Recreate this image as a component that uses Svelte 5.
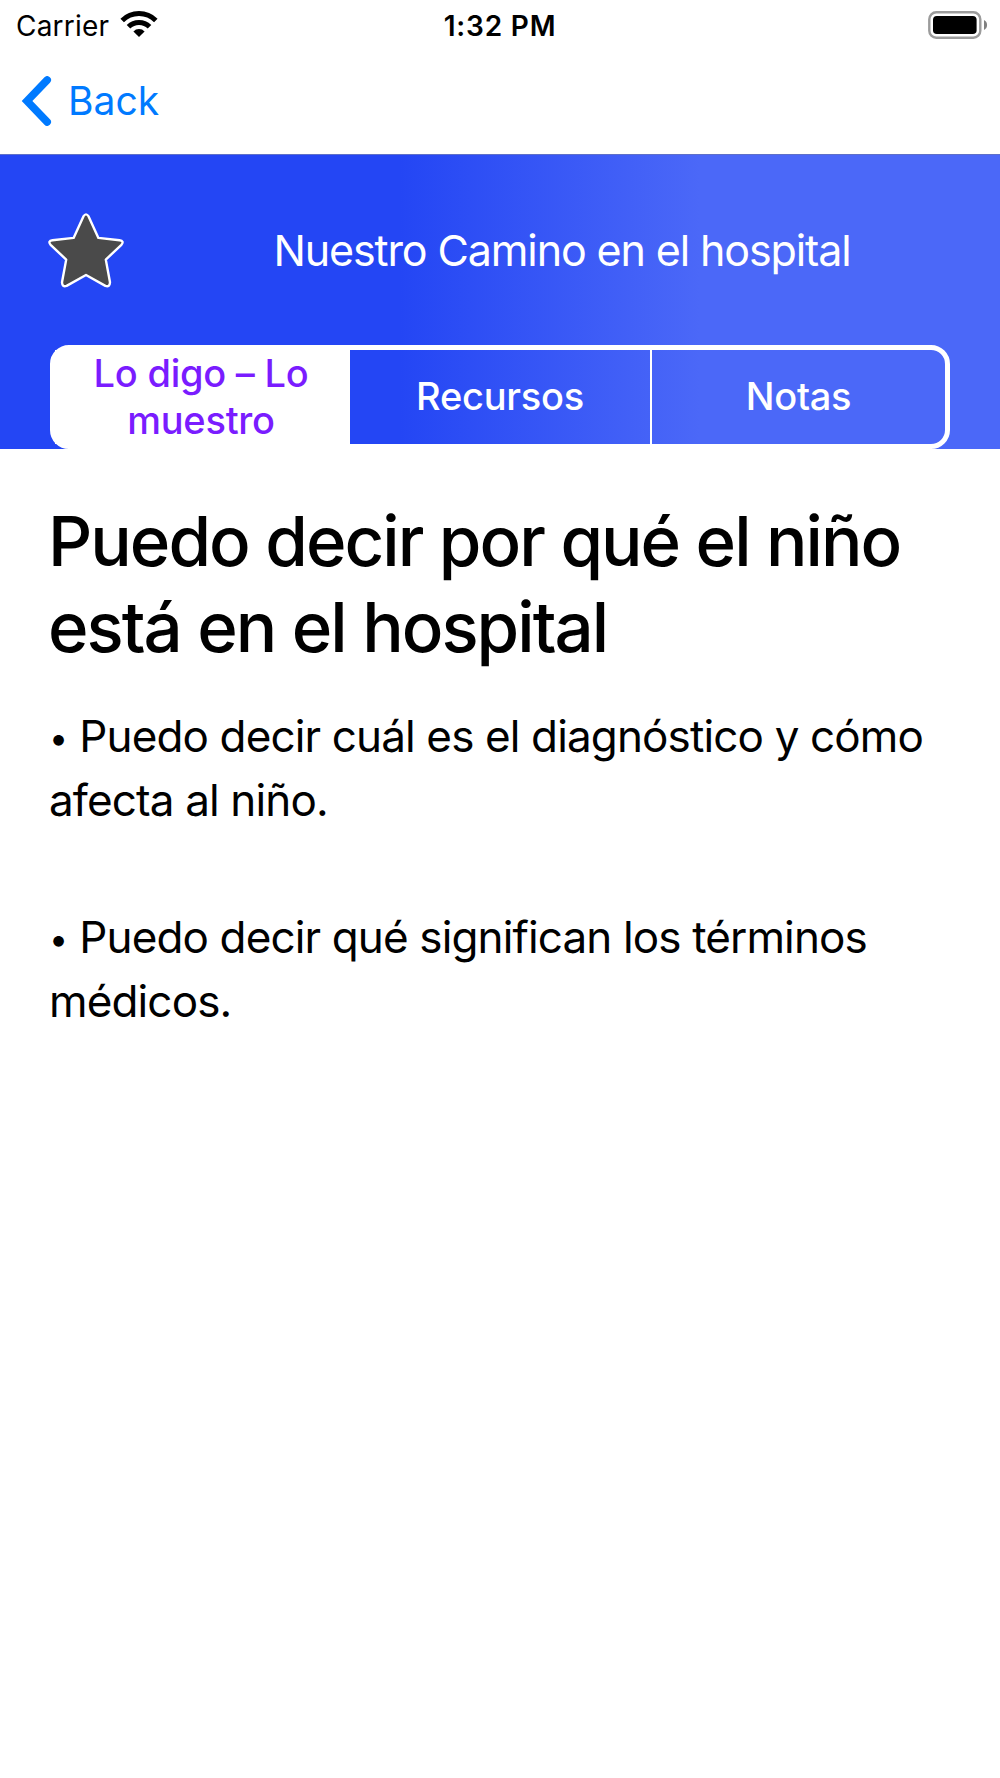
<script>
  /**
   * Topic detail screen: status bar, back navigation, tabbed header and content.
   */

  let carrier = 'Carrier';
  let time = '1:32 PM';
  let title = 'Nuestro Camino en el hospital';

  const tabs = [
    { id: 'say', lines: ['Lo digo – Lo', 'muestro'] },
    { id: 'resources', lines: ['Recursos'] },
    { id: 'notes', lines: ['Notas'] },
  ];

  const heading = ['Puedo decir por qué el niño', 'está en el hospital'];

  const points = [
    ['Puedo decir cuál es el diagnóstico y cómo', 'afecta al niño.'],
    ['Puedo decir qué significan los términos', 'médicos.'],
  ];

  let active_tab = $state('say');
  let favorite = $state(false);
</script>

<div class="screen">
  <div class="status-bar">
    <div class="carrier">
      <span>{carrier}</span>
      <svg class="wifi" width="38" height="28" viewBox="0 0 38 28">
        <g fill="none" stroke="#000" stroke-width="5">
          <path d="M2.2 10.4 A23.8 23.8 0 0 1 35.8 10.4" />
          <path d="M8.5 16.8 A14.8 14.8 0 0 1 29.5 16.8" />
        </g>
        <path d="M13.4 21.4 A8 8 0 0 1 24.6 21.4 L19 27 Z" />
      </svg>
    </div>
    <span class="time">{time}</span>
    <svg class="battery" width="60" height="30" viewBox="0 0 60 30">
      <rect x="1.3" y="1.3" width="51" height="25.4" rx="7" fill="none" stroke="#9b9b9b" stroke-width="2.4" />
      <rect x="5" y="5" width="43.6" height="18" rx="3.8" />
      <path d="M56 9 A5.6 5.6 0 0 1 56 19 Z" fill="#808080" />
    </svg>
  </div>

  <nav class="nav-bar">
    <button type="button" class="back">
      <svg width="31" height="50" viewBox="0 0 31 50">
        <path d="M26.2 4 L6 25 L26.2 46" fill="none" stroke="#007aff" stroke-width="7.6" stroke-linecap="round" stroke-linejoin="miter" />
      </svg>
      <span>Back</span>
    </button>
  </nav>

  <header class="topic">
    <div class="topic-row">
      <button type="button" class="favorite" aria-label="Favorito" onclick={() => (favorite = !favorite)}>
        <svg width="76" height="76" viewBox="0 0 76 76">
          <path
            d="M35.4 3.4 Q38 -0.6 40.6 3.4 L50.4 24.9 L71.5 27.2 Q76.5 28 73.4 31.8 L57.8 46.6 L62 69.3 Q61.8 74.4 57.4 72.9 L38 62 L18.6 72.9 Q14.2 74.4 14 69.3 L18.2 46.6 L2.6 31.8 Q-0.5 28 4.5 27.2 L25.6 24.9 Z"
            fill={favorite ? '#ffcc00' : '#4a4a4a'}
            stroke="#fff"
            stroke-width="2.4"
            stroke-linejoin="round"
          />
        </svg>
      </button>
      <h1>{title}</h1>
    </div>

    <div class="tabs">
      {#each tabs as tab (tab.id)}
        <button
          type="button"
          class="tab"
          class:active={active_tab === tab.id}
          onclick={() => (active_tab = tab.id)}
        >
          {#each tab.lines as line}
            <span>{line}</span>
          {/each}
        </button>
      {/each}
    </div>
  </header>

  <main>
    <h2>
      {#each heading as line}
        <span class="line">{line}</span>
      {/each}
    </h2>
    {#each points as point}
      <p>
        {#each point as line, i}
          <span class="line">{#if i === 0}<span class="bullet">•</span>{/if}{line}</span>
        {/each}
      </p>
    {/each}
  </main>
</div>

<style>
  :global(body) {
    margin: 0;
    background: #fff;
  }

  .screen {
    width: 1000px;
    height: 1778px;
    overflow: hidden;
    background: #fff;
    color: #000;
    font-family: Inter, 'Liberation Sans', sans-serif;
  }

  button {
    margin: 0;
    padding: 0;
    border: none;
    background: none;
    color: inherit;
    font: inherit;
    cursor: pointer;
  }

  h1,
  h2,
  p {
    margin: 0;
    font-weight: 400;
    white-space: nowrap;
  }

  .line {
    display: block;
  }

  /* Status bar */
  .status-bar {
    display: grid;
    grid-template-columns: 1fr auto 1fr;
    align-items: center;
    box-sizing: border-box;
    height: 50px;
    padding: 1px 16px 0;
    font-size: 28px;
  }

  .carrier {
    display: flex;
    align-items: center;
    gap: 11px;
    letter-spacing: 0.2px;
  }

  .wifi {
    margin-bottom: 3px;
  }

  .time {
    font-weight: 600;
    letter-spacing: 0.8px;
  }

  .battery {
    justify-self: end;
    margin: 0 -4px 0 0;
  }

  /* Navigation */
  .nav-bar {
    display: flex;
    align-items: center;
    box-sizing: border-box;
    height: 104px;
    padding: 0 21px 3px;
  }

  .back {
    display: flex;
    align-items: center;
    gap: 16px;
    color: #007aff;
    font-size: 39px;
  }

  /* Topic header */
  .topic {
    display: flex;
    flex-direction: column;
    justify-content: space-between;
    box-sizing: border-box;
    height: 294.5px;
    padding: 58px 50px 0;
    border-top: 1px solid #5f70c8;
    background: linear-gradient(90deg, #2446f4 40%, #4b68f8 70%);
    color: #fff;
  }

  .topic-row {
    display: flex;
    align-items: center;
  }

  .favorite {
    flex: none;
    height: 76px;
    margin-left: -2px;
  }

  h1 {
    flex: 1;
    padding: 0 0 3px 50px;
    text-align: center;
    font-size: 43px;
    letter-spacing: -1.12px;
  }

  .tabs {
    display: grid;
    grid-template-columns: 295px 300px 1fr;
    box-sizing: border-box;
    height: 103.5px;
    border: 5px solid #fff;
    border-radius: 19px;
  }

  .tab {
    display: flex;
    flex-direction: column;
    align-items: center;
    justify-content: center;
    padding-bottom: 2px;
    font-size: 38px;
    font-weight: 500;
    line-height: 47px;
    letter-spacing: -0.25px;
  }

  .tab + .tab + .tab {
    border-left: 2px solid #fff;
  }

  .tab.active {
    padding: 0 3px 0 0;
    background: #fff;
    color: #7a1cff;
  }

  /* Content */
  main {
    padding: 49.5px 48px;
  }

  h2 {
    margin-bottom: 34px;
    font-size: 69px;
    font-weight: 500;
    line-height: 86px;
    letter-spacing: -1.97px;
  }

  p {
    padding-left: 1px;
    font-size: 44px;
    line-height: 64px;
    letter-spacing: -0.86px;
  }

  p + p {
    margin-top: 73px;
  }

  .bullet {
    margin-right: 12px;
    font-size: 34px;
    line-height: 1;
    vertical-align: 2px;
  }
</style>
